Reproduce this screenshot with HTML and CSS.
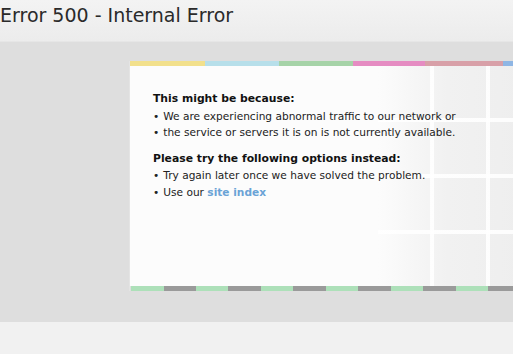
FILE: index.html
```html
<!DOCTYPE html>
<html>
<head>
    <meta charset="utf-8">
    <title>Error 500 - Internal Error</title>
    <link rel="stylesheet" href="styles.css">
</head>
<body>
    <div class="header">
        <h1>Error 500 - Internal Error</h1>
    </div>

    <div class="main">
        <div class="card">
            <div class="stripe-top">
                <span class="yellow"></span>
                <span class="blue"></span>
                <span class="green"></span>
                <span class="pink"></span>
                <span class="rose"></span>
                <span class="sky"></span>
            </div>
            <div class="card-body">
                <div class="tiles"></div>
                <h2>This might be because:</h2>
                <ul>
                    <li>We are experiencing abnormal traffic to our network or</li>
                    <li>the service or servers it is on is not currently available.</li>
                </ul>
                <h2 class="second">Please try the following options instead:</h2>
                <ul>
                    <li>Try again later once we have solved the problem.</li>
                    <li>Use our <a href="#">site index</a></li>
                </ul>
            </div>
            <div class="stripe-bottom"></div>
        </div>
    </div>

    <div class="footer"></div>
</body>
</html>
```

FILE: styles.css
```css
html, body {
    margin: 0;
    padding: 0;
    overflow: hidden;
}

body {
    font-family: "DejaVu Sans", Verdana, sans-serif;
    background: #dedede;
    color: #222;
}

.header {
    height: 42px;
    background: linear-gradient(to bottom, #f3f3f3, #ececec);
    border-bottom: 1px solid #e6e6e6;
    box-sizing: border-box;
}

h1 {
    margin: 0;
    padding: 3px 0 0 0;
    font-size: 19px;
    font-weight: normal;
    line-height: 24px;
    color: #2a2a2a;
}

.main {
    height: 280px;
    box-sizing: border-box;
    padding: 19px 0 0 129px;
}

.card {
    width: 420px;
    border-left: 1px solid #e4e4e4;
}

.stripe-top {
    display: flex;
    height: 5px;
}

.stripe-top span { display: block; }
.stripe-top .yellow { width: 75px; background: #f2e08c; }
.stripe-top .blue { width: 74px; background: #b7dfea; }
.stripe-top .green { width: 74px; background: #a6d3a8; }
.stripe-top .pink { width: 72px; background: #e58cc2; }
.stripe-top .rose { width: 78px; background: #d8a0a8; }
.stripe-top .sky { width: 47px; background: #8fb6e4; }

.card-body {
    position: relative;
    height: 220px;
    box-sizing: border-box;
    padding: 25px 0 0 23px;
    background: #fcfcfc;
    font-size: 10.6px;
    line-height: 16.5px;
}

.tiles {
    position: absolute;
    top: 0;
    bottom: 0;
    left: 248px;
    right: 0;
    background:
        repeating-linear-gradient(to right, transparent 0 52px, rgba(255, 255, 255, 0.9) 52px 56px),
        repeating-linear-gradient(to bottom, transparent 0 52px, rgba(255, 255, 255, 0.9) 52px 56px),
        linear-gradient(to right, #fcfcfc, #f1f1f1 40%, #ededed);
}

h2 {
    position: relative;
    margin: 0;
    font-size: 10.8px;
    font-weight: bold;
    color: #111;
}

h2.second {
    margin-top: 10px;
}

ul {
    position: relative;
    margin: 0;
    padding: 0;
    list-style: none;
}

li::before {
    content: "\2022";
    margin-right: 4px;
}

a {
    color: #6aa3d6;
    font-weight: bold;
    text-decoration: none;
}

.stripe-bottom {
    height: 5px;
    margin-left: 1px;
    background: repeating-linear-gradient(to right, #ade0b9 0 32.5px, #9a9a9a 32.5px 65px);
}

.footer {
    height: 32px;
    background: #f1f1f1;
}
```
